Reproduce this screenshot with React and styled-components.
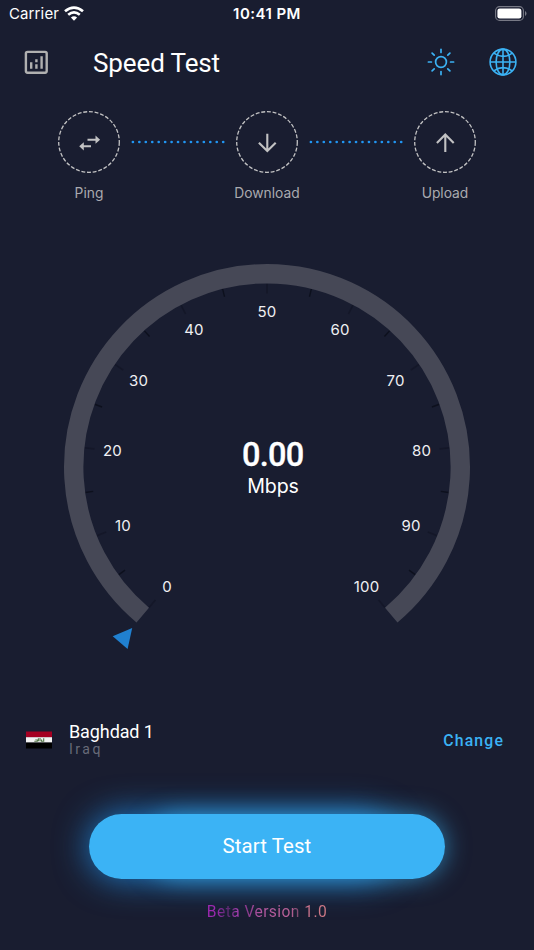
import React from "react";
import styled, { createGlobalStyle } from "styled-components";

const GlobalStyle = createGlobalStyle`
  *, *::before, *::after { box-sizing: border-box; }
  body { margin: 0; background: #191d30; }
`;

const Screen = styled.main`
  width: 534px;
  height: 950px;
  overflow: hidden;
  isolation: isolate;
  display: flex;
  flex-direction: column;
  background: #191d30;
  color: #fff;
  font-family: Roboto, sans-serif;
`;

const StatusBar = styled.div`
  height: 28px;
  flex: none;
  display: grid;
  grid-template-columns: 1fr auto 1fr;
  align-items: center;
  padding: 0 7px 2px 9px;
  font-family: Inter, sans-serif;
  font-size: 15px;
`;

const Carrier = styled.div`
  display: flex;
  align-items: center;
  gap: 5px;
  letter-spacing: 0.12px;
`;

const Clock = styled.div`
  margin-left: -2px;
  font-weight: 600;
  font-size: 15px;
  letter-spacing: 0.45px;
`;

const BatterySlot = styled.div`
  display: flex;
  justify-content: flex-end;
`;

const Header = styled.header`
  height: 70px;
  flex: none;
  display: flex;
  align-items: center;
  padding: 0 17px 2px 24px;
`;

const Title = styled.h1`
  margin: 0 auto 0 45px;
  padding-top: 1px;
  font-size: 26px;
  line-height: 32px;
  font-weight: 400;
  letter-spacing: -0.12px;
`;

const HeaderActions = styled.div`
  display: flex;
  align-items: center;
  gap: 34px;
`;

const Steps = styled.section`
  height: 110px;
  flex: none;
  display: flex;
  justify-content: center;
  padding-top: 13px;
`;

const Step = styled.div`
  width: 84px;
  display: flex;
  flex-direction: column;
  align-items: center;
  gap: 11px;
`;

const StepLabel = styled.span`
  font-family: Inter, sans-serif;
  font-size: 13.8px;
  line-height: 18px;
  letter-spacing: 0;
  color: #a9aaaf;
  white-space: nowrap;
`;

const Connector = styled.svg`
  width: 94px;
  height: 4px;
  margin-top: 29px;
  flex: none;
`;

const Dial = styled.section`
  height: 480px;
  flex: none;
  display: flex;
  justify-content: center;
`;

const DialNumber = styled.text`
  font-family: Inter, sans-serif;
  font-size: 15px;
  letter-spacing: 0.2px;
  fill: #f0f0f3;
  text-anchor: middle;
`;

const Reading = styled.text`
  font-family: Roboto, sans-serif;
  font-size: 32.5px;
  font-weight: 500;
  letter-spacing: -0.75px;
  fill: #fff;
  stroke: #fff;
  stroke-width: 0.35px;
  text-anchor: middle;
`;

const Unit = styled.text`
  font-family: Inter, sans-serif;
  font-size: 19.6px;
  letter-spacing: -0.15px;
  fill: #fff;
  text-anchor: middle;
`;

const ServerRow = styled.section`
  height: 50px;
  flex: none;
  margin-top: 27px;
  display: flex;
  align-items: center;
  padding: 0 30px 0 26px;
`;

const Server = styled.div`
  display: flex;
  flex-direction: column;
  margin: 0 auto 0 17px;
  padding-bottom: 2px;
`;

const ServerName = styled.span`
  font-size: 18px;
  line-height: 20px;
  letter-spacing: -0.1px;
`;

const Country = styled.span`
  font-size: 14px;
  line-height: 15px;
  letter-spacing: 2.5px;
  color: #686b78;
`;

const ChangeButton = styled.button`
  border: 0;
  padding: 1px 0 0;
  background: none;
  color: #3bb2f4;
  font: 500 15.8px/20px Roboto, sans-serif;
  letter-spacing: 1.15px;
`;

const StartButton = styled.button`
  position: relative;
  width: 356px;
  height: 65px;
  flex: none;
  margin: 48.5px auto 0;
  border: 0;
  border-radius: 33px;
  background: #3bb3f5;
  color: #fff;
  font: 400 20.4px/26px Roboto, sans-serif;
  letter-spacing: 0.1px;

  &::before,
  &::after {
    content: "";
    position: absolute;
    z-index: -1;
    inset: 0 50px 0 0;
    border-radius: 33px;
    box-shadow: 0 0 34px rgba(33, 150, 243, 0.8);
  }

  &::after {
    inset: 0 0 0 57px;
    box-shadow: 0 0 24px rgba(59, 179, 245, 0.65);
  }
`;

const Version = styled.p`
  margin: 22.5px auto 0;
  font-size: 15.6px;
  line-height: 22px;
  letter-spacing: 0.43px;
  color: transparent;
  background: linear-gradient(
    90deg,
    #9c27b0 0%,
    #9c2ab0 8%,
    #6b2a80 14%,
    #5b2a70 19%,
    #a13cae 25%,
    #8a3a8c 34%,
    #b156a0 45%,
    #ba6297 70%,
    #5d3c58 79%,
    #c7718b 84%,
    #d07b84 100%
  );
  background-clip: text;
`;

const CX = 267;
const CY = 259;
const point = (radius, degrees) => {
  const a = (degrees * Math.PI) / 180;
  return [CX + radius * Math.cos(a), CY + radius * Math.sin(a)];
};

const LABELS = [
  ["0", 167, 383.5], ["10", 123, 322.5], ["20", 112.5, 248], ["30", 138.5, 177.5],
  ["40", 194, 127], ["50", 267, 109], ["60", 340, 127], ["70", 395.5, 177.5],
  ["80", 421.5, 248], ["90", 411, 322.5], ["100", 366.5, 383.5],
];

function Gauge() {
  const [x1, y1] = point(193.3, 130);
  const [x2, y2] = point(193.3, 50);
  return (
    <svg width="534" height="480" viewBox="0 0 534 480">
      {Array.from({ length: 21 }, (_, i) => {
        const major = i % 2 === 0;
        const [ax, ay] = point(183.5, 130 + i * 14);
        const [bx, by] = point(major ? 173.5 : 175.5, 130 + i * 14);
        return (
          <line key={i} x1={ax} y1={ay} x2={bx} y2={by}
            stroke={major ? "#141728" : "#0d101d"} strokeWidth={major ? 1.6 : 1.4} />
        );
      })}
      <path d={`M${x1} ${y1}A193.3 193.3 0 1 1 ${x2} ${y2}`} fill="none" stroke="#464856" strokeWidth="19.4" />
      <path d="M112.7 428.3L132.2 420L127.6 441Z" fill="#2080d0" />
      {LABELS.map(([t, x, y]) => <DialNumber key={t} x={x} y={y}>{t}</DialNumber>)}
      <Reading x="272.8" y="258">0.00</Reading>
      <Unit x="273" y="284.6">Mbps</Unit>
    </svg>
  );
}

function StepIcon({ children }) {
  return (
    <svg width="62" height="62" viewBox="0 0 62 62" fill="none" stroke="#c2c2c3">
      <circle cx="31" cy="31" r="30.3" strokeWidth="1.3" strokeDasharray="3.9 1.8" />
      {children}
    </svg>
  );
}

function Dots() {
  return (
    <Connector viewBox="0 0 94 4">
      {Array.from({ length: 15 }, (_, i) => (
        <circle key={i} cx={1.9 + i * 6.45} cy="2" r="1.35" fill="#2196f3" />
      ))}
    </Connector>
  );
}

function Wifi() {
  return (
    <svg width="20" height="15" viewBox="0 0 20 15" fill="none" stroke="#fff" strokeWidth="2.7">
      <path d="M1 5.3Q10-2.1 19 5.3M4.2 8.8Q10 4.1 15.8 8.8" />
      <path d="M6.9 11.6Q10 9 13.1 11.6L10 14.7Z" fill="#fff" stroke="none" />
    </svg>
  );
}

function Battery() {
  return (
    <svg width="32" height="15" viewBox="0 0 32 15">
      <rect x=".6" y=".6" width="27.8" height="13.8" rx="4" fill="none" stroke="#777985" strokeWidth="1.1" />
      <rect x="2.4" y="2.4" width="24" height="10.2" rx="2.4" fill="#fff" />
      <path d="M30 5Q31.5 5.8 31.5 7.5T30 10Z" fill="#777985" />
    </svg>
  );
}

function ChartIcon() {
  return (
    <svg width="24" height="24" viewBox="0 0 24 24" fill="none" stroke="#b0b0b0" strokeWidth="2.4">
      <rect x="1.9" y="1.9" width="20.8" height="20.8" rx="1.6" />
      <path d="M7.2 12.3v6.5M12.4 9.3v3M12.4 14.3v4.5M17.6 6.3v12.5" />
    </svg>
  );
}

function SunIcon() {
  return (
    <svg width="28" height="28" viewBox="0 0 28 28" fill="none" stroke="#3bb2f4" strokeWidth="1.7" strokeLinecap="round">
      <circle cx="14" cy="14" r="5.4" />
      {[0, 45, 90, 135, 180, 225, 270, 315].map((a) => (
        <path key={a} d="M14 1.4v3" transform={`rotate(${a} 14 14)`} />
      ))}
    </svg>
  );
}

function GlobeIcon() {
  return (
    <svg width="28" height="28" viewBox="0 0 28 28" fill="none" stroke="#3bb2f4" strokeWidth="1.6">
      <circle cx="14" cy="14" r="12.9" />
      <ellipse cx="14" cy="14" rx="6.9" ry="12.9" />
      <path d="M14 1v26M1 14h26M4.8 5.2Q14 11.6 23.2 5.2M4.8 22.8Q14 16.4 23.2 22.8" />
    </svg>
  );
}

function Flag() {
  return (
    <svg width="26" height="18" viewBox="0 0 26 18">
      <path d="M0 .5h26v6H0z" fill="#a50022" />
      <path d="M0 6.2h26v5.5H0z" fill="#f2f2f2" />
      <path d="M0 11.5h26v6H0z" fill="#000" />
      <path d="M8.3 10.3h3V8.5M12.4 10.3V7.2M14 10.3V7M15.5 8.5v1.8h2.2V7.2M9.5 8.8h1" fill="none" stroke="#55784a" strokeWidth="1.1" />
    </svg>
  );
}

export default function App() {
  return (
    <Screen>
      <GlobalStyle />
      <StatusBar>
        <Carrier>Carrier <Wifi /></Carrier>
        <Clock>10:41 PM</Clock>
        <BatterySlot><Battery /></BatterySlot>
      </StatusBar>
      <Header>
        <ChartIcon />
        <Title>Speed Test</Title>
        <HeaderActions><SunIcon /><GlobeIcon /></HeaderActions>
      </Header>
      <Steps>
        <Step>
          <StepIcon>
            <path d="M29.5 28.7h9M24 35.3h9" strokeWidth="2" />
            <path d="M37.5 24.6l4.6 4.1-4.6 4.1zM25.8 31.2l-4.6 4.1 4.6 4.1z" fill="#c2c2c3" stroke="none" />
          </StepIcon>
          <StepLabel>Ping</StepLabel>
        </Step>
        <Dots />
        <Step>
          <StepIcon><path d="M31.3 22.7v17.5M22.9 31.7l8.4 8.4 8.4-8.4" strokeWidth="2.1" /></StepIcon>
          <StepLabel>Download</StepLabel>
        </Step>
        <Dots />
        <Step>
          <StepIcon><path d="M31.3 41V23.5M22.9 31.9l8.4-8.4 8.4 8.4" strokeWidth="2.1" /></StepIcon>
          <StepLabel>Upload</StepLabel>
        </Step>
      </Steps>
      <Dial><Gauge /></Dial>
      <ServerRow>
        <Flag />
        <Server>
          <ServerName>Baghdad 1</ServerName>
          <Country>Iraq</Country>
        </Server>
        <ChangeButton>Change</ChangeButton>
      </ServerRow>
      <StartButton>Start Test</StartButton>
      <Version>Beta Version 1.0</Version>
    </Screen>
  );
}
